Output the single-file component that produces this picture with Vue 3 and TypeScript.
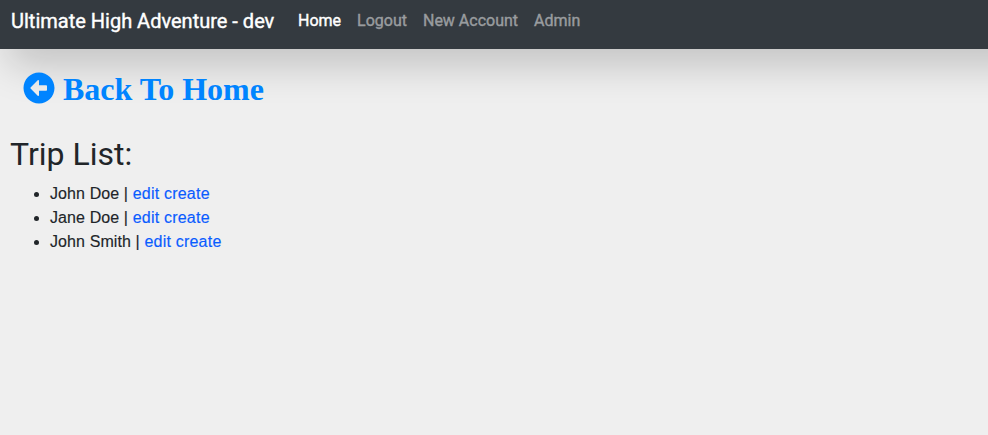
<script setup lang="ts">
interface NavLink { label: string; active: boolean }
const links: NavLink[] = [
  { label: 'Home', active: true },
  { label: 'Logout', active: false },
  { label: 'New Account', active: false },
  { label: 'Admin', active: false },
]
const people: string[] = ['John Doe', 'Jane Doe', 'John Smith']
</script>

<template>
  <div class="page">
    <nav class="navbar">
      <a class="brand">Ultimate High Adventure - dev</a>
      <a v-for="l in links" :key="l.label" class="nav-link" :class="{ active: l.active }">{{ l.label }}</a>
    </nav>
    <main>
      <a class="back">
        <svg class="icon" viewBox="0 0 512 512"><path fill="currentColor" d="M256 504C119 504 8 393 8 256S119 8 256 8s248 111 248 248-111 248-248 248zm116-292H256v-70.900c0-10.700-13-16.100-20.500-8.500L121.200 247.500c-4.700 4.700-4.700 12.200 0 16.900l114.300 114.900c7.600 7.600 20.500 2.200 20.500-8.500V300h116c6.600 0 12-5.400 12-12v-64c0-6.600-5.400-12-12-12z"/></svg>
        <span>Back To Home</span>
      </a>
      <h2>Trip List:</h2>
      <ul>
        <li v-for="p in people" :key="p">{{ p }} | <a>edit</a> <a>create</a></li>
      </ul>
    </main>
  </div>
</template>

<style>
body { background: #efefef; }
</style>

<style scoped>
.page { min-height: 435px; overflow: hidden; font: 16px/24px Roboto, sans-serif; color: #212529; background: #efefef; }
.navbar { display: flex; align-items: flex-start; height: 49px; box-sizing: border-box; margin-right: -40px; padding: 6px 11px; background: #343a40; box-shadow: 8px 15px 40px rgba(0, 0, 0, 0.2); color: #fff; white-space: nowrap; }
.brand { font-size: 20px; line-height: 30px; width: 263px; margin-right: 16px; -webkit-text-stroke: 0.4px currentColor; }
.nav-link { padding: 3px 8px; color: #999c9f; -webkit-text-stroke: 0.4px currentColor; }
.nav-link.active { color: #fff; }
main { position: relative; padding: 23px 10px 0; }
.back { display: flex; align-items: center; gap: 8px; height: 32px; padding-left: 13px; color: #0084ff; font: bold 32px/32px "Liberation Serif", serif; }
.back span { padding-top: 2px; }
.icon { width: 32px; height: 32px; }
h2 { margin: 31px 0 8.6px; font-size: 32px; line-height: 38.4px; font-weight: 400; }
ul { margin: 0; padding-left: 40px; font-family: "Liberation Sans", sans-serif; letter-spacing: 0.1px; -webkit-text-stroke: 0.15px currentColor; }
li a { color: #0a5cff; letter-spacing: 0.23px; -webkit-text-stroke: 0.15px currentColor; }
</style>
